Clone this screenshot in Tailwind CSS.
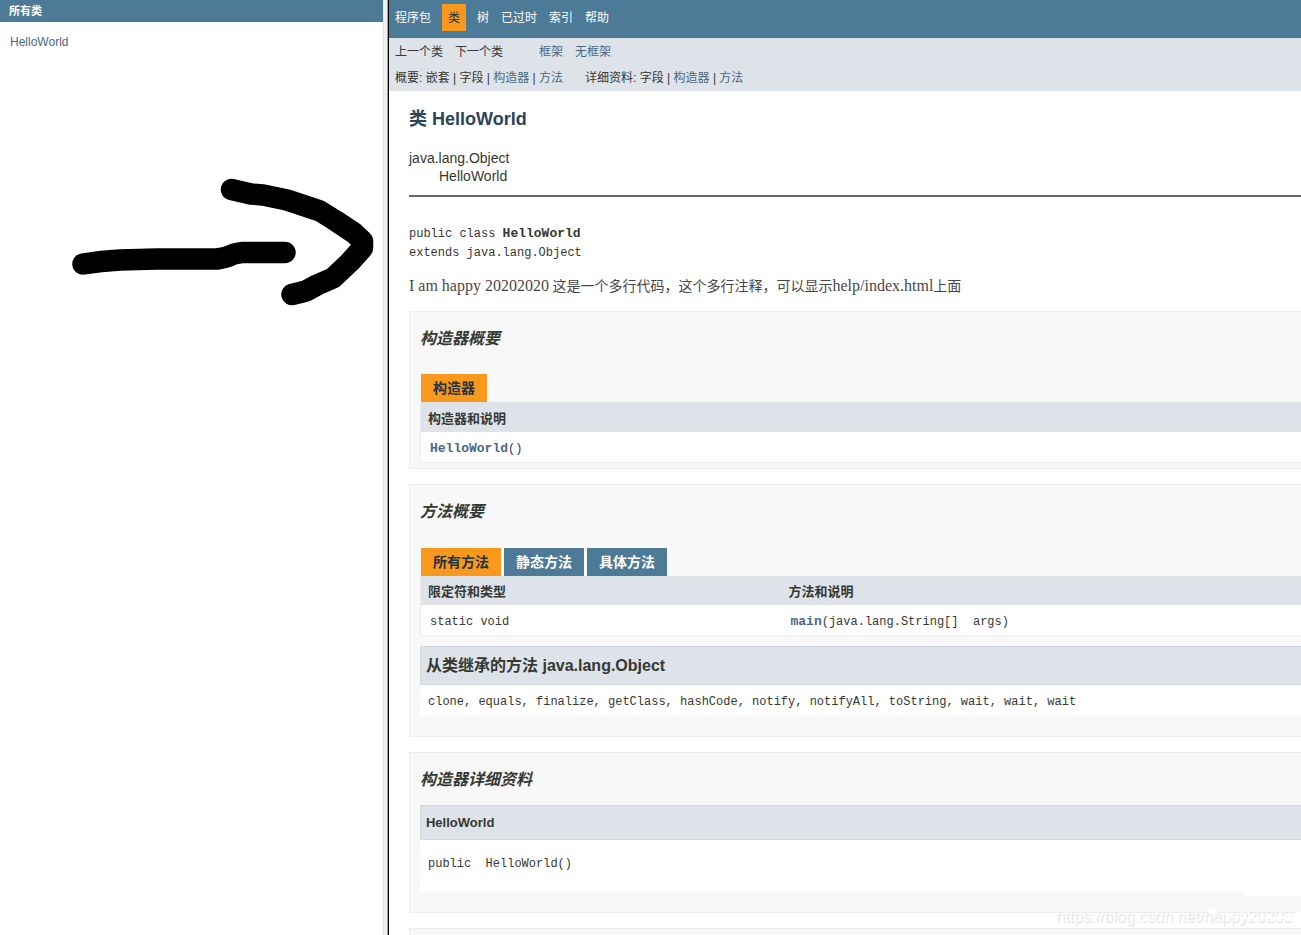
<!DOCTYPE html>
<html lang="zh-CN">

<head>
  <meta charset="UTF-8">
  <meta name="viewport" content="width=device-width, initial-scale=1.0">
  <title>HelloWorld</title>
  <script src="https://cdn.jsdelivr.net/npm/@tailwindcss/browser@4"></script>
</head>

<body class="bg-white text-[#353833] font-['Liberation_Sans','Noto_Sans_CJK_SC',sans-serif]">
  <div class="relative flex h-screen overflow-hidden">

    <!-- Class list -->
    <aside class="w-[29.9%] shrink-0 flex">
      <div class="flex-1">
        <h1 class="bg-[#4d7a97] text-white text-[11px] leading-[22px] font-bold px-[9px]">所有类</h1>
        <ul class="px-[10px] pt-[11px] text-xs leading-[18px]">
          <li><a href="#helloworld" class="text-[#4a6782]">HelloWorld</a></li>
        </ul>
      </div>
      <div class="w-[4px] bg-[#f0f0f0] border-l border-[#e3e3e3]"></div>
      <div class="w-[2px] bg-black border-l border-[#a0a0a0]"></div>
    </aside>

    <main class="flex-1 min-w-0">
      <nav class="bg-[#4d7a97] text-white text-xs h-[38px] px-[6px] pt-1">
        <ul class="flex gap-3 leading-[25px]">
          <li class="pt-[2px]"><a href="#package">程序包</a></li>
          <li class="pt-[2px] bg-[#f8981d] text-[#253441] px-[6px] -mx-px">类</li>
          <li class="pt-[2px]"><a href="#tree">树</a></li>
          <li class="pt-[2px]"><a href="#deprecated">已过时</a></li>
          <li class="pt-[2px]"><a href="#index">索引</a></li>
          <li class="pt-[2px]"><a href="#help">帮助</a></li>
        </ul>
      </nav>
      <div class="bg-[#dee3e9] text-xs leading-[26px] px-[6px] pt-px">
        <div class="flex gap-9">
          <ul class="flex gap-3">
            <li>上一个类</li>
            <li>下一个类</li>
          </ul>
          <ul class="flex gap-3">
            <li><a href="#frames" class="text-[#4a6782]">框架</a></li>
            <li><a href="#noframes" class="text-[#4a6782]">无框架</a></li>
          </ul>
        </div>
        <div class="flex gap-[22px]">
          <p>概要: 嵌套 | 字段 | <a href="#constructors" class="text-[#4a6782]">构造器</a> | <a href="#methods" class="text-[#4a6782]">方法</a></p>
          <p>详细资料: 字段 | <a href="#constructor-detail" class="text-[#4a6782]">构造器</a> | <a href="#methods" class="text-[#4a6782]">方法</a></p>
        </div>
      </div>

      <div class="pl-5">
        <h2 id="helloworld" class="text-[#2c4557] text-lg leading-6 font-bold pt-4">类 HelloWorld</h2>
        <ul class="text-sm leading-[18px] pt-[18px]">
          <li>java.lang.Object</li>
          <li class="pl-[30px]">HelloWorld</li>
        </ul>
        <hr class="mt-[10px] border-t-2 border-[#666]">
        <pre class="mt-[27px] font-['Liberation_Mono',monospace] text-xs leading-[19px]">public class <b class="text-[13px]">HelloWorld</b>
extends java.lang.Object</pre>
        <p class="mt-[13px] h-5 text-sm leading-5 text-[#474747] font-['Liberation_Serif','Noto_Sans_CJK_SC',serif]"><span class="text-base leading-5">I am happy 20202020</span> 这是一个多行代码，这个多行注释，可以显示<span class="text-base leading-5">help/index.html</span>上面</p>

        <!-- Constructor summary -->
        <section id="constructors" class="mt-[15px] border border-r-0 border-[#ededed] bg-[#f8f8f8] pl-[10px] pb-[5px]">
          <h3 class="text-base leading-6 font-bold italic pt-[15px]">构造器概要</h3>
          <div class="flex mt-[23px] pl-px text-sm leading-7 font-bold">
            <span class="bg-[#f8981d] text-[#253441] px-3">构造器</span>
          </div>
          <table class="w-full text-left">
            <thead>
              <tr class="bg-[#dee3e9] text-[13px] leading-[27px]">
                <th class="border-l border-[#eee] pt-[3px] px-[7px] font-bold">构造器和说明</th>
              </tr>
            </thead>
            <tbody>
              <tr class="bg-white font-['Liberation_Mono',monospace] text-xs leading-[26px]">
                <td class="border-l border-b border-[#eee] pt-1 px-[9px]"><a href="#constructor-detail" class="text-[13px] font-bold text-[#4a6782]">HelloWorld</a>()</td>
              </tr>
            </tbody>
          </table>
        </section>

        <!-- Method summary -->
        <section id="methods" class="mt-[15px] border border-r-0 border-[#ededed] bg-[#f8f8f8] pl-[10px] pb-5">
          <h3 class="text-base leading-6 font-bold italic pt-[15px]">方法概要</h3>
          <div class="flex gap-[3px] mt-6 pl-px text-sm leading-7 font-bold">
            <button type="button" class="bg-[#f8981d] text-[#253441] px-3">所有方法</button>
            <button type="button" class="bg-[#4d7a97] text-white px-3">静态方法</button>
            <button type="button" class="bg-[#4d7a97] text-white px-3">具体方法</button>
          </div>
          <table class="w-full table-fixed text-left">
            <thead>
              <tr class="bg-[#dee3e9] text-[13px] leading-[27px]">
                <th class="w-[41%] border-l border-[#eee] pt-[2px] px-[7px] font-bold">限定符和类型</th>
                <th class="pt-[2px] px-[7px] font-bold">方法和说明</th>
              </tr>
            </thead>
            <tbody>
              <tr class="bg-white font-['Liberation_Mono',monospace] text-xs leading-[26px]">
                <td class="border-l border-b border-[#eee] pt-1 px-[9px]">static void</td>
                <td class="border-b border-[#eee] pt-1 px-[9px]"><a href="#main" class="text-[13px] font-bold text-[#4a6782]">main</a>(java.lang.String[]&nbsp; args)</td>
              </tr>
            </tbody>
          </table>
          <h4 class="mt-[10px] border border-r-0 border-[#d0d9e0] bg-[#dee3e9] px-[5px] text-base leading-[37px] font-bold">从类继承的方法 java.lang.Object</h4>
          <p class="bg-white px-2 pt-[3px] text-xs leading-7 font-['Liberation_Mono',monospace]">clone, equals, finalize, getClass, hashCode, notify, notifyAll, toString, wait, wait, wait</p>
        </section>

        <!-- Constructor detail -->
        <section id="constructor-detail" class="mt-[15px] border border-r-0 border-[#ededed] bg-[#f8f8f8] pl-[10px] pb-5">
          <h3 class="text-base leading-6 font-bold italic pt-[15px]">构造器详细资料</h3>
          <h4 class="mt-[13px] border border-r-0 border-[#d0d9e0] bg-[#dee3e9] px-[5px] text-[13px] leading-[33px] font-bold">HelloWorld</h4>
          <pre class="bg-white px-2 pt-3 pb-4 text-xs leading-6 font-['Liberation_Mono',monospace]">public&nbsp; HelloWorld()</pre>
        </section>

        <section class="mt-[15px] border border-r-0 border-[#ededed] bg-[#f8f8f8] h-40"></section>
      </div>
    </main>

    <!-- Hand-drawn arrow -->
    <svg class="absolute left-[60px] top-[170px]" width="325" height="145" viewBox="60 170 325 145" fill="none" stroke="#000" stroke-width="21.5" stroke-linecap="round" stroke-linejoin="round">
      <path d="M83 264Q101 261 120 260L157 259H217Q226 258 234 254L242 252.500H285"/>
      <path d="M231.500 189.500L251 194L263 195L287 200L302 205L320 211L336 221L354 233L362.500 241V248L350 262L333 278L317 285L306 291L292 294.500"/>
    </svg>

    <!-- Watermark -->
    <div class="absolute right-[9px] bottom-[6px] text-base leading-6 text-white/70 [text-shadow:1px_1px_1px_#ddd]">https://blog.csdn.net/happy20202</div>
    <svg class="absolute right-0 bottom-[14px]" width="101" height="30" viewBox="1200 891 101 30" fill="#fff">
      <path d="M1236 891H1301V896H1247L1244 893H1238Z"/>
      <path d="M1206 909L1214 908L1218 914H1228L1236 916L1252 918L1270 917L1288 916L1297 912H1301V921H1288L1284 919L1244 919L1238 917L1225 915L1210 914Z"/>
    </svg>
  </div>
</body>

</html>
